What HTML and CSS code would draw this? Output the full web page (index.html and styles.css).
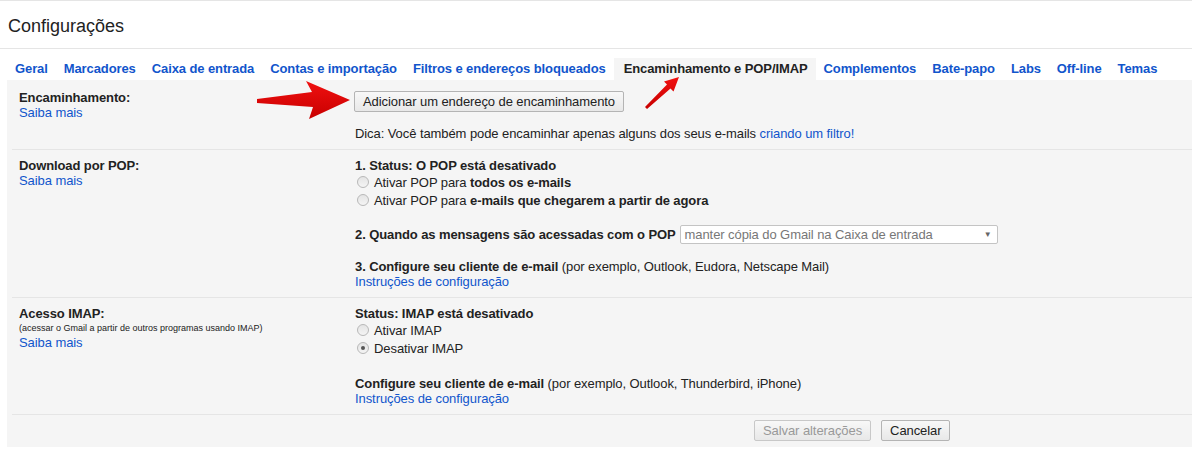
FILE: index.html
```html
<!DOCTYPE html>
<html lang="pt-BR">
<head>
  <meta charset="UTF-8" />
  <title>Configurações</title>
  <link rel="stylesheet" href="styles.css">
</head>
<body>

<div class="header">
  <h1>Configurações</h1>
</div>

<!-- Abas -->
<div class="tabs">
  <a class="tab">Geral</a>
  <a class="tab">Marcadores</a>
  <a class="tab">Caixa de entrada</a>
  <a class="tab">Contas e importação</a>
  <a class="tab">Filtros e endereços bloqueados</a>
  <a class="tab active">Encaminhamento e POP/IMAP</a>
  <a class="tab">Complementos</a>
  <a class="tab">Bate-papo</a>
  <a class="tab">Labs</a>
  <a class="tab">Off-line</a>
  <a class="tab">Temas</a>
</div>

<div class="panel">
  <!-- Encaminhamento -->
  <div class="row first">
    <div class="label">
      <div class="title">Encaminhamento:</div>
      <a class="link">Saiba mais</a>
    </div>
    <div class="value">
      <button class="btn add">Adicionar um endereço de encaminhamento</button>
      <div class="tip">Dica: Você também pode encaminhar apenas alguns dos seus e-mails <a class="link">criando um filtro!</a></div>
    </div>
  </div>

  <!-- POP -->
  <div class="row">
    <div class="label">
      <div class="title">Download por POP:</div>
      <a class="link">Saiba mais</a>
    </div>
    <div class="value">
      <div class="title">1. Status: O POP está desativado</div>
      <label class="radio"><span class="dot"></span>Ativar POP para&nbsp;<b>todos os e-mails</b></label>
      <label class="radio"><span class="dot"></span>Ativar POP para&nbsp;<b>e-mails que chegarem a partir de agora</b></label>
      <div class="select-line">
        <b>2. Quando as mensagens são acessadas com o POP</b>
        <span class="select">manter cópia do Gmail na Caixa de entrada<span class="caret">▼</span></span>
      </div>
      <div class="step"><b>3. Configure seu cliente de e-mail</b> (por exemplo, Outlook, Eudora, Netscape Mail)</div>
      <a class="link">Instruções de configuração</a>
    </div>
  </div>

  <!-- IMAP -->
  <div class="row">
    <div class="label">
      <div class="title">Acesso IMAP:</div>
      <div class="small">(acessar o Gmail a partir de outros programas usando IMAP)</div>
      <a class="link">Saiba mais</a>
    </div>
    <div class="value">
      <div class="title">Status: IMAP está desativado</div>
      <label class="radio"><span class="dot"></span>Ativar IMAP</label>
      <label class="radio"><span class="dot checked"></span>Desativar IMAP</label>
      <div class="step imap"><b>Configure seu cliente de e-mail</b> (por exemplo, Outlook, Thunderbird, iPhone)</div>
      <a class="link">Instruções de configuração</a>
    </div>
  </div>

  <div class="footer">
    <button class="btn" disabled>Salvar alterações</button>
    <button class="btn">Cancelar</button>
  </div>
</div>

<!-- setas vermelhas por cima da captura -->
<svg class="arrows" width="1192" height="460" viewBox="0 0 1192 460">
  <defs>
    <linearGradient id="red" x1="0" y1="0" x2="0" y2="1">
      <stop offset="0" stop-color="#f01010"/>
      <stop offset="1" stop-color="#c80000"/>
    </linearGradient>
  </defs>
  <polygon fill="url(#red)" points="257,99 312,92 306,81 350,100 309,119 313,107 257,103"/>
  <polygon fill="url(#red)" points="645,107 667,84.5 664,81.5 679,77 673.5,91.5 670.5,88.5 647,109"/>
</svg>

</body>
</html>
```

FILE: styles.css
```css
body {
  margin: 0;
  font-family: Arial, "Liberation Sans", sans-serif;
  font-size: 13px;
  letter-spacing: -0.08px;
  color: #222;
  background: #fff;
  position: relative;
}

b {
  letter-spacing: -0.1px;
}

.header {
  border-top: 1px solid #e5e5e5;
  border-bottom: 1px solid #e5e5e5;
  height: 47px;
  padding-left: 8px;
}

h1 {
  margin: 0;
  padding-top: 4px;
  font-size: 18px;
  font-weight: normal;
  line-height: 43px;
  letter-spacing: 0;
  color: #222;
}

.tabs {
  display: flex;
  padding: 9px 0 0 7px;
}

.tab {
  padding: 0 8px;
  line-height: 22px;
  font-weight: bold;
  letter-spacing: -0.1px;
  color: #15c;
  text-decoration: none;
}

.tab.active {
  color: #222;
  background: #f5f5f5;
  padding: 0 8px 0 10px;
}

.panel {
  margin-left: 7px;
  padding-left: 5px;
  background: #f5f5f5;
}

.row {
  display: grid;
  grid-template-columns: 336px 1fr;
  padding: 8px 0 8px 7px;
  border-bottom: 1px solid #e5e5e5;
  line-height: 15px;
}

.row.first {
  padding-top: 10px;
}

.title {
  font-weight: bold;
  letter-spacing: -0.1px;
}

.link {
  color: #15c;
  text-decoration: none;
  cursor: pointer;
}

.small {
  font-size: 9px;
  line-height: 14px;
  letter-spacing: 0;
}

.btn {
  height: 21px;
  padding: 0 8px;
  font-family: Arial, "Liberation Sans", sans-serif;
  font-size: 13px;
  letter-spacing: -0.08px;
  color: #222;
  background: linear-gradient(#f8f8f8, #e8e8e8);
  border: 1px solid #b4b4b4;
  border-radius: 2px;
}

.btn:disabled {
  color: #999;
  border-color: #c8c8c8;
}

.btn.add {
  display: block;
  margin: 1px 0 0 -1px;
}

.tip {
  margin-top: 14px;
}

.radio {
  display: flex;
  align-items: center;
  height: 18px;
}

.dot {
  width: 10px;
  height: 10px;
  border-radius: 50%;
  border: 1px solid #b8b8b8;
  background: linear-gradient(#e4e4e4, #f4f4f4);
  margin: 0 5px 0 2px;
  position: relative;
}

.dot.checked::after {
  content: "";
  position: absolute;
  left: 3px;
  top: 3px;
  width: 4px;
  height: 4px;
  border-radius: 50%;
  background: #555;
}

.select-line {
  display: flex;
  align-items: center;
  height: 20px;
  margin-top: 15px;
}

.select {
  position: relative;
  display: inline-block;
  width: 312px;
  height: 17px;
  line-height: 17px;
  margin-left: 4px;
  padding-left: 4px;
  border: 1px solid #c4c4c4;
  border-radius: 2px;
  background: #fff;
  color: #777;
}

.caret {
  position: absolute;
  right: 5px;
  top: 0;
  font-size: 8px;
  color: #666;
}

.step {
  margin-top: 15px;
}

.step.imap {
  margin-top: 19px;
}

.footer {
  display: flex;
  gap: 10px;
  padding: 5px 0 6px 742px;
}

.arrows {
  position: absolute;
  top: 0;
  left: 0;
  pointer-events: none;
}
```
